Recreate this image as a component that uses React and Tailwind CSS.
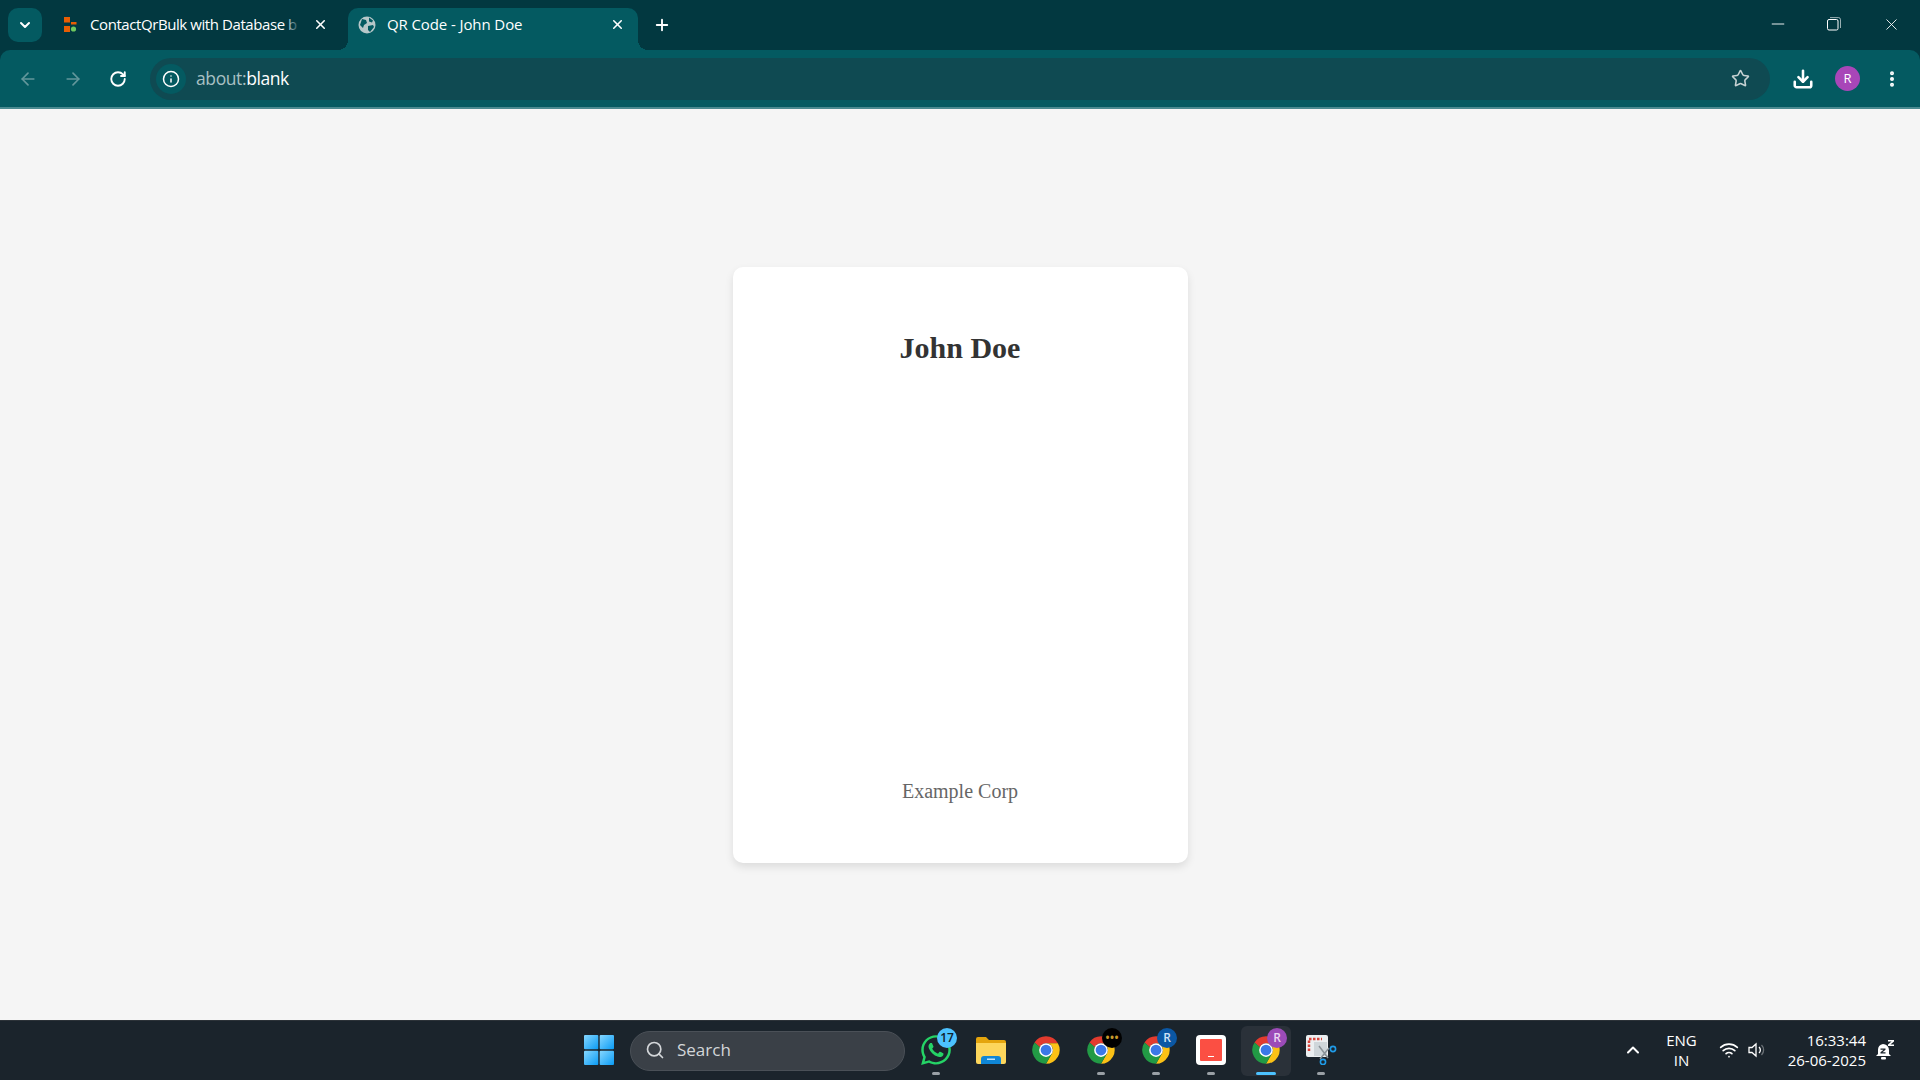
import React from "react";
import { ArrowLeft, ArrowRight, RotateCw, Info, Star, Download, EllipsisVertical, X, Plus, ChevronDown, ChevronUp, Minus, Search, Wifi } from "lucide-react";
import { FaWhatsapp } from "react-icons/fa";

const ui = { fontFamily: '"Open Sans", "Noto Sans", sans-serif' };

function ChromeIcon({ size = 30 }) {
  return (
    <svg width={size} height={size} viewBox="0 0 48 48">
      <path d="M24 2a22 22 0 0 1 19 11H24a11 11 0 0 0-10 6.5L5.6 12A22 22 0 0 1 24 2z" fill="#e33b2e" />
      <path d="M43 13H24a11 11 0 0 1 9.5 16.5L24 46a22 22 0 0 0 19-33z" fill="#fbc116" />
      <path d="M5.6 12A22 22 0 0 0 24 46l9.5-16.5a11 11 0 0 1-19-10L5.6 12z" fill="#229a45" />
      <circle cx="24" cy="24" r="11" fill="#fff" />
      <circle cx="24" cy="24" r="8.6" fill="#3b78e7" />
    </svg>
  );
}

function Tile({ children, indicator, active }) {
  return (
    <div className={`relative flex h-[50px] w-[50px] items-center justify-center rounded-md pb-[2px] ${active ? "bg-[#2a3139]" : ""}`}>
      {children}
      {indicator && (
        <span className={`absolute bottom-[1px] left-1/2 h-[3px] -translate-x-1/2 rounded-full ${active ? "w-5 bg-[#4cc2ff]" : "w-2 bg-[#9aa0a6]"}`} />
      )}
    </div>
  );
}

function Badge({ className, children }) {
  return (
    <span className={`absolute flex h-[20px] w-[20px] items-center justify-center rounded-full text-[12px] font-semibold ${className}`}>
      {children}
    </span>
  );
}

function Tab({ active, icon, title, fade, className }) {
  return (
    <div className={`relative flex h-[42px] items-center rounded-t-[10px] pb-[9px] text-[15px] text-white ${className} ${active ? "bg-[#045a61]" : ""}`}>
      {active && <span className="absolute -left-[10px] bottom-0 h-[10px] w-[10px] bg-[radial-gradient(circle_at_0_0,transparent_10px,#045a61_10px)]" />}
      {active && <span className="absolute -right-[10px] bottom-0 h-[10px] w-[10px] bg-[radial-gradient(circle_at_100%_0,transparent_10px,#045a61_10px)]" />}
      <div className="flex w-[20px] shrink-0 items-center justify-center">{icon}</div>
      <span className="ml-[10px] min-w-0 flex-1 overflow-hidden whitespace-nowrap">{title}</span>
      {fade && <span className="absolute right-[48px] top-0 h-full w-4 bg-gradient-to-r from-transparent to-[#023840]" />}
      <X size={15} strokeWidth={2.5} className={`shrink-0 ${fade ? "ml-[13px]" : "ml-2"}`} />
    </div>
  );
}

export default function App() {
  return (
    <div className="flex h-screen w-full flex-col overflow-hidden bg-[#f5f5f5]" style={ui}>
      {/* Tab strip */}
      <div className="flex h-[50px] shrink-0 items-end bg-[#023840]">
        <div className="mb-2 ml-2 flex h-[34px] w-[34px] items-center justify-center rounded-[10px] bg-[#045a61]">
          <ChevronDown size={16} strokeWidth={3} className="text-white" />
        </div>
        <Tab
          fade
          className="w-[306px] pl-[18px] pr-[20px] tracking-[-0.42px]"
          title="ContactQrBulk with Database b"
          icon={
            <svg width="13" height="15" viewBox="0 0 13 15" className="shrink-0">
              <rect x="0" y="0" width="6" height="5.5" fill="#e85d04" />
              <rect x="7" y="5" width="5.5" height="2.5" fill="#e85d04" />
              <rect x="0" y="9" width="6" height="6" fill="#e85d04" />
              <circle cx="9.5" cy="12" r="2.6" fill="#6fc95f" />
            </svg>
          }
        />
        <Tab
          active
          className="w-[290px] pl-[9px] pr-[13px] tracking-[-0.1px]"
          title="QR Code - John Doe"
          icon={
            <svg width="18" height="18" viewBox="0 0 18 18">
              <circle cx="9" cy="9" r="8.5" fill="#b7c7c9" />
              <path d="M4 3l4 1 1 3-3 2-1 3-3-3zM11 1.5l4 3-1 2-3-1zM10 10l5-1 1 2-4 5-2-2z" fill="#045a61" />
            </svg>
          }
        />
        <div className="mb-[8px] ml-[7px] flex h-[34px] w-[34px] items-center justify-center">
          <Plus size={18} strokeWidth={2.5} className="text-white" />
        </div>
        <div className="flex-1" />
        <div className="flex h-full items-center pb-[2px] text-white">
          <div className="flex w-[56px] justify-center"><Minus size={20} strokeWidth={1.1} /></div>
          <div className="flex w-[56px] justify-center">
            <svg width="14" height="14" viewBox="0 0 14 14" fill="none" stroke="currentColor" strokeWidth="1">
              <rect x="0.5" y="2.5" width="10.5" height="10.5" rx="1.5" />
              <path d="M3 .6h8.5a2 2 0 0 1 2 2V11" opacity=".6" />
            </svg>
          </div>
          <div className="flex w-[58px] justify-center"><X size={19} strokeWidth={1.1} /></div>
        </div>
      </div>

      {/* Toolbar */}
      <div className="flex h-[59px] shrink-0 items-start border-b-2 border-[#4a8a90] bg-[#023840]">
        <div className="flex h-[57px] w-full items-center rounded-t-[10px] bg-[#045a61]">
          <div className="flex w-[150px] shrink-0 items-center pl-[18px]">
            <ArrowLeft size={20} className="text-[#63979b]" />
            <ArrowRight size={20} className="ml-[25px] text-[#63979b]" />
            <RotateCw size={18} strokeWidth={2.5} className="ml-[26px] text-white" />
          </div>
          <div className="flex h-[42px] flex-1 items-center rounded-full bg-[#0f4a52] pl-[6px] pr-[20px]">
            <div className="flex h-[30px] w-[30px] items-center justify-center rounded-full bg-[#045a61]">
              <Info size={18} className="text-white" />
            </div>
            <span className="ml-[10px] text-[17.5px] tracking-[-0.4px] text-[#a8c0c3]">
              about:<span className="text-white">blank</span>
            </span>
            <div className="flex-1" />
            <Star size={19} strokeWidth={2} className="text-[#c7d2d3]" />
          </div>
          <div className="flex w-[150px] shrink-0 items-center pl-[22px] text-white">
            <Download size={22} strokeWidth={2.8} />
            <span className="ml-[21px] flex h-[25px] w-[25px] items-center justify-center rounded-full bg-[#a846b8] text-[13px]">R</span>
            <EllipsisVertical size={20} strokeWidth={2.8} className="ml-[22px]" />
          </div>
        </div>
      </div>

      {/* Page */}
      <main className="flex min-h-0 flex-1 items-center justify-center" style={{ fontFamily: '"Liberation Serif", serif' }}>
        <div className="flex h-[596px] w-[455px] flex-col items-center rounded-[10px] bg-white pt-[64px] shadow-[0_4px_8px_rgba(0,0,0,0.1)]">
          <h1 className="text-[30px] font-bold leading-[34px] text-[#333]">John Doe</h1>
          <div className="flex-1" />
          <p className="mb-[60px] text-[20px] leading-[23px] text-[#666]">Example Corp</p>
        </div>
      </main>

      {/* Taskbar */}
      <div className="grid h-[60px] shrink-0 grid-cols-[1fr_auto_1fr] items-center border-t border-[#2c3238] bg-[#1b242c] text-white">
        <div />
        <div className="flex items-center pl-[10px]">
          <svg width="30" height="30" viewBox="0 0 30 30" className="mb-[2px] mr-[16px]">
            <defs>
              <linearGradient id="w" x1="0" y1="0" x2="1" y2="1">
                <stop offset="0" stopColor="#86d7ff" />
                <stop offset="1" stopColor="#0a9bf5" />
              </linearGradient>
            </defs>
            <rect x="0" y="0" width="14.3" height="14.3" rx="1" fill="url(#w)" />
            <rect x="15.7" y="0" width="14.3" height="14.3" rx="1" fill="url(#w)" />
            <rect x="0" y="15.7" width="14.3" height="14.3" rx="1" fill="url(#w)" />
            <rect x="15.7" y="15.7" width="14.3" height="14.3" rx="1" fill="url(#w)" />
          </svg>
          <div className="mr-[6px] flex h-10 w-[275px] items-center rounded-full border border-[#4a5057] bg-[#3a4047] pb-[1px] pl-[14px] text-[#d3d6d9]">
            <Search size={20} strokeWidth={2} />
            <span className="ml-[12px] text-[17px]">Search</span>
          </div>
          <div className="flex items-center gap-[5px]">
            <Tile indicator>
              <FaWhatsapp size={34} className="text-[#25d366]" />
              <Badge className="right-[4px] top-[2px] bg-[#4cc2ff] text-[#10202c]">17</Badge>
            </Tile>
            <Tile>
              <svg width="30" height="28" viewBox="0 0 30 28">
                <path d="M0 3a2 2 0 0 1 2-2h8l3 3h15a2 2 0 0 1 2 2v3H0z" fill="#e5a50d" />
                <path d="M0 7h30v19a2 2 0 0 1-2 2H2a2 2 0 0 1-2-2z" fill="#fdd65c" />
                <path d="M5 23a3 3 0 0 1 3-3h14a3 3 0 0 1 3 3v5H5z" fill="#0f86d6" />
                <rect x="11" y="22.5" width="8" height="1.5" fill="#bfe3fa" />
              </svg>
            </Tile>
            <Tile><ChromeIcon /></Tile>
            <Tile indicator>
              <ChromeIcon />
              <Badge className="right-[4px] top-[2px] bg-black text-[6px] text-[#c79a2b]">•••</Badge>
            </Tile>
            <Tile indicator>
              <ChromeIcon />
              <Badge className="right-[4px] top-[2px] bg-[#0b57a4] text-[#cfe3f7]">R</Badge>
            </Tile>
            <Tile indicator>
              <div className="flex h-[30px] w-[30px] items-center justify-center rounded-[4px] bg-white">
                <div className="relative h-[22px] w-[22px] rounded-[1px] bg-[#fb4f43]">
                  <span className="absolute bottom-[4px] left-[8px] h-[1px] w-[6px] bg-white" />
                </div>
              </div>
            </Tile>
            <Tile indicator active>
              <ChromeIcon />
              <Badge className="right-[4px] top-[2px] bg-[#9c4bb8] text-[#ecd8f2]">R</Badge>
            </Tile>
            <Tile indicator>
              <svg width="32" height="30" viewBox="0 0 32 30">
                <rect x="1" y="0" width="22" height="22" rx="2" fill="#eceff1" />
                <rect x="9" y="7" width="13" height="14" fill="#cfd6da" />
                <path d="M4 16V4h13" fill="none" stroke="#d9433a" strokeWidth="2.5" strokeDasharray="2.5 1.5" />
                <path d="M14 11l9 12M24 13l-9 11" stroke="#8a9298" strokeWidth="1.5" />
                <circle cx="28" cy="14" r="2.6" fill="none" stroke="#1f9be8" strokeWidth="1.6" />
                <circle cx="18" cy="27" r="2.6" fill="none" stroke="#1f9be8" strokeWidth="1.6" />
              </svg>
            </Tile>
          </div>
        </div>
        <div className="flex items-center justify-end pb-[2px] text-[15px] leading-[20px]">
          <ChevronUp size={20} strokeWidth={2.4} className="mr-[23px]" />
          <div className="mr-[22px] flex flex-col items-center"><span>ENG</span><span>IN</span></div>
          <Wifi size={20} className="mr-[8px]" />
          <svg width="20" height="20" viewBox="0 0 20 20" fill="none" stroke="currentColor" strokeWidth="1.3" className="mr-[21px]">
            <path d="M2 7.5h3l4-3.5v12l-4-3.5H2z" />
            <path d="M12 7a4 4 0 0 1 0 6" />
            <path d="M14.5 5a7 7 0 0 1 0 10" opacity=".35" />
          </svg>
          <div className="flex flex-col items-end"><span>16:33:44</span><span>26-06-2025</span></div>
          <svg width="20" height="22" viewBox="0 0 20 22" className="ml-[9px] mr-[25px]" fill="currentColor">
            <path d="M8 5a6 6 0 0 1 6 6v4l2 2H1l2-2v-4a6 6 0 0 1 5-6z" />
            <rect x="6" y="18" width="5" height="2.5" rx="1" />
            <path d="M13 1h6v1.4l-3.6 3.2H19V7h-6V5.6l3.6-3.2H13z" />
            <path d="M5.5 9.5h5v1.2l-3 2.6h3v1.2h-5v-1.2l3-2.6h-3z" fill="#1b242c" />
          </svg>
        </div>
      </div>
    </div>
  );
}
